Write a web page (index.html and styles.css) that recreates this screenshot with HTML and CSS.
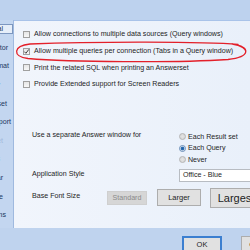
FILE: index.html
```html
<!DOCTYPE html>
<html>
<head>
<meta charset="utf-8">
<link rel="stylesheet" href="styles.css">
</head>
<body>
<div class="window">
  <div class="topbar"></div>
  <div class="main">
    <nav class="sidebar">
      <div class="nav-item selected"><span class="sel-box">General</span></div>
      <div class="nav-item end8">Editor</div>
      <div class="nav-item end9">Format</div>
      <div class="nav-item end-hide">Query</div>
      <div class="nav-item end7">Answerset</div>
      <div class="nav-item end11">Import/Export</div>
      <div class="nav-item end3 faint">Set</div>
      <div class="nav-item end-hide">Tools</div>
      <div class="nav-item end3">Toolbar</div>
      <div class="nav-item end3">Database</div>
      <div class="nav-item end6">Connections</div>
    </nav>
    <section class="panel">
      <div class="checks">
        <label class="check-row"><span class="checkbox"></span><span>Allow connections to multiple data sources (Query windows)</span></label>
        <label class="check-row"><span class="checkbox checked"><svg viewBox="0 0 7 7" class="tick"><path d="M1.3 3.6 L2.9 5.3 L5.8 1.4" /></svg></span><span>Allow multiple queries per connection (Tabs in a Query window)</span></label>
        <label class="check-row"><span class="checkbox"></span><span>Print the related SQL when printing an Answerset</span></label>
        <label class="check-row"><span class="checkbox"></span><span>Provide Extended support for Screen Readers</span></label>
      </div>
      <div class="options">
        <div class="opt-row answer-row">
          <div class="opt-label">Use a separate Answer window for</div>
          <div class="radios">
            <div class="radio-row"><span class="radio"></span>Each Result set</div>
            <div class="radio-row"><span class="radio on"></span>Each Query</div>
            <div class="radio-row"><span class="radio"></span>Never</div>
          </div>
        </div>
        <div class="opt-row style-row">
          <div class="opt-label">Application Style</div>
          <div class="combo">Office - Blue</div>
        </div>
        <div class="font-row">
          <div class="font-label">Base Font Size</div>
          <div class="font-buttons">
            <div class="btn btn-standard">Standard</div>
            <div class="btn btn-larger">Larger</div>
            <div class="btn btn-largest">Largest</div>
          </div>
        </div>
      </div>
    </section>
  </div>
  <div class="footer">
    <div class="btn dlg-btn default">OK</div>
    <div class="btn dlg-btn">Cancel</div>
  </div>
  <svg class="annotation" viewBox="0 0 250 250" width="250" height="250">
    <path d="M238 44.5 C205 41.5 95 41.5 30 44 C13 46 12 56 28 58.5 C70 62 175 63 228 59.5 C251 57 251 47 232 44" />
  </svg>
</div>
</body>
</html>
```

FILE: styles.css
```css
html, body {
  margin: 0;
  padding: 0;
}
body {
  width: 250px;
  height: 250px;
  overflow: hidden;
  background: #bfd3ee;
  font-family: "Liberation Sans", Arial, sans-serif;
  font-size: 7.1px;
  color: #1e1e1e;
}
.window {
  position: relative;
  width: 250px;
  height: 250px;
  display: flex;
  flex-direction: column;
}
.topbar {
  height: 20px;
  flex: none;
  background: #bdd2ee;
  border-bottom: 1px solid #a9c3e9;
}
.main {
  height: 207px;
  flex: none;
  display: flex;
}
.sidebar {
  width: 13px;
  flex: none;
  background: #c3d6f0;
  border-right: 1px solid #9fb9df;
  overflow: hidden;
  color: #22365e;
  margin-top: -1px;
}
.nav-item {
  height: 18.6px;
  display: flex;
  align-items: center;
  justify-content: flex-end;
  white-space: nowrap;
}
.nav-item.selected {
  justify-content: flex-start;
}
.sel-box {
  display: flex;
  justify-content: flex-end;
  align-items: center;
  width: 13px;
  height: 10px;
  box-sizing: border-box;
  background: #e6eef9;
  border: 1px solid #7d97bf;
  border-left: none;
  padding-right: 9px;
}
.end3 { padding-right: 10px; }
.end6 { padding-right: 7px; }
.end7 { padding-right: 6px; }
.end8 { padding-right: 5px; }
.end9 { padding-right: 4px; }
.end11 { padding-right: 2px; }
.end-hide { padding-right: 14px; }
.faint { color: #9fb6da; }
.panel {
  flex: 1;
  background: linear-gradient(90deg, #f1f5fc, #e9f0fa);
  padding: 5px 0 0 9px;
  box-sizing: border-box;
  overflow: hidden;
}
.check-row {
  height: 16.7px;
  display: flex;
  align-items: center;
  gap: 4px;
  white-space: nowrap;
}
.checkbox {
  width: 7px;
  height: 7px;
  flex: none;
  box-sizing: border-box;
  border: 1px solid #a0a0a0;
  background: linear-gradient(#e6e6e6, #f7f7f7);
  position: relative;
}
.tick {
  position: absolute;
  left: -1px;
  top: -1px;
  width: 7px;
  height: 7px;
}
.tick path {
  fill: none;
  stroke: #404040;
  stroke-width: 1;
}
.options {
  margin-top: 38px;
  padding-left: 9px;
}
.opt-row {
  display: grid;
  grid-template-columns: 147px auto;
  align-items: start;
}
.opt-label {
  white-space: nowrap;
  line-height: 10px;
}
.answer-row .opt-label {
  margin-top: -1px;
}
.radios {
  display: flex;
  flex-direction: column;
}
.radio-row {
  height: 11.6px;
  display: flex;
  align-items: center;
  gap: 2px;
  white-space: nowrap;
}
.radio {
  width: 7px;
  height: 7px;
  box-sizing: border-box;
  border-radius: 50%;
  border: 1px solid #b4b4b4;
  background: radial-gradient(circle, #e4e4e4, #d4d4d4);
  flex: none;
}
.radio.on {
  border-color: #6a8db8;
  background: radial-gradient(circle, #1f5fa3 0, #2f72b7 1.6px, #dfe7f1 2.2px);
}
.style-row {
  margin-top: 3px;
}
.combo {
  width: 80px;
  height: 13px;
  box-sizing: border-box;
  background: #ffffff;
  border: 1px solid #b8bcc2;
  padding-left: 3px;
  display: flex;
  align-items: center;
  white-space: nowrap;
}
.font-row {
  display: flex;
  margin-top: 6px;
}
.font-label {
  width: 75px;
  flex: none;
  line-height: 10px;
  margin-top: 3px;
  white-space: nowrap;
}
.font-buttons {
  display: flex;
  align-items: center;
  height: 20px;
}
.btn {
  box-sizing: border-box;
  display: flex;
  align-items: center;
  justify-content: center;
  white-space: nowrap;
  background: #e1e1e1;
  border: 1px solid #adadad;
  color: #1e1e1e;
  flex: none;
}
.btn-standard {
  width: 40px;
  height: 14px;
  background: #d6d6d6;
  border-color: #cfcfcf;
  color: #8a8a8a;
}
.btn-larger {
  width: 44px;
  height: 17px;
  margin-left: 10px;
  font-size: 7.5px;
}
.btn-largest {
  width: 52px;
  height: 20px;
  margin-left: 9px;
  font-size: 11px;
}
.footer {
  flex: 1;
  display: flex;
  padding: 8px 0 0 182px;
  gap: 19px;
}
.dlg-btn {
  width: 40px;
  height: 17px;
  font-size: 7.5px;
}
.dlg-btn.default {
  border: 2px solid #3c7fd0;
}
.annotation {
  position: absolute;
  left: 0;
  top: 0;
  pointer-events: none;
}
.annotation path {
  fill: none;
  stroke: #e3202a;
  stroke-width: 1.3;
  stroke-linecap: round;
}
```
